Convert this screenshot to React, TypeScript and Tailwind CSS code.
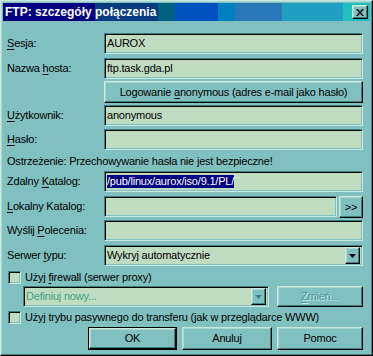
import React from 'react';

const sunken =
  'border border-t-[#408080] border-l-[#408080] border-b-[#c8e8e0] border-r-[#c8e8e0] shadow-[inset_1px_1px_0_#000,inset_-1px_-1px_0_#80c0c0] bg-[#c0dcc0]';
const raised =
  'border border-t-[#c8e8e0] border-l-[#c8e8e0] border-b-black border-r-black shadow-[inset_-1px_-1px_0_#408080,inset_1px_1px_0_#a8d8d0] bg-[#80c0c0]';

function U({ children }: { children: React.ReactNode }) {
  return <span className="underline underline-offset-[2px] decoration-1">{children}</span>;
}

function Row({ label, className, children }: { label: React.ReactNode; className: string; children?: React.ReactNode }) {
  return (
    <div className={`flex items-center h-[21px] ${className}`}>
      <div className="w-[97px] shrink-0">{label}</div>
      <div className="flex-1 flex h-full gap-[2px]">{children}</div>
    </div>
  );
}

function Field({ value, className = '' }: { value?: React.ReactNode; className?: string }) {
  return (
    <div className={`${sunken} flex-1 h-full flex items-center pl-[2px] overflow-hidden whitespace-nowrap ${className}`}>
      {value}
    </div>
  );
}

function Arrow({ disabled = false }: { disabled?: boolean }) {
  return (
    <div className={`${raised} w-[15px] h-[17px] flex items-center justify-center shrink-0`}>
      <svg width="7" height="4" viewBox="0 0 7 4">
        <path d="M0 0h7L3.5 4z" fill={disabled ? '#408080' : '#000'} />
      </svg>
    </div>
  );
}

function Checkbox() {
  return <div className={`${sunken} w-[13px] h-[13px] shrink-0`} />;
}

export default function App() {
  return (
    <div className="w-[373px] h-[356px] bg-[#80c0c0] border border-t-[#c8e8e0] border-l-[#c8e8e0] border-b-black border-r-black shadow-[inset_-1px_-1px_0_#408080,inset_1px_1px_0_#a8d8d0] p-[1px] font-['Liberation_Sans',Arial,sans-serif] text-[11px] tracking-[-0.2px] text-black leading-none select-none">
      <div className="mx-[1px] mt-[1px] h-[18px] flex items-center justify-between pl-[2px] pr-[2px] bg-[linear-gradient(to_right,#000080_0_92px,#083a80_92px_155px,#006080_155px_172px,#0050c0_172px_215px,#0080c0_215px_232px,#2878b8_232px_279px,#20a0c0_279px_340px,#20c0c0_340px)]">
        <span className="text-white font-bold text-[12px] tracking-normal">FTP: szczegóły połączenia</span>
        <div className={`${raised} w-[16px] h-[14px] flex items-center justify-center`}>
          <svg width="8" height="7" viewBox="0 0 8 7">
            <path d="M0 0h2l2 2.5L6 0h2L5 3.5 8 7H6L4 4.5 2 7H0l3-3.5z" fill="#000" />
          </svg>
        </div>
      </div>

      <div className="pl-[5px] pr-[8px]">
        <Row className="mt-[12px]" label={<><U>S</U>esja:</>}>
          <Field value="AUROX" />
        </Row>
        <Row className="mt-[4px]" label={<>Nazwa <U>h</U>osta:</>}>
          <Field value="ftp.task.gda.pl" />
        </Row>
        <div className="flex mt-[2px]">
          <div className="w-[97px] shrink-0" />
          <div className={`${raised} flex-1 h-[22px] flex items-center justify-center`}>
            <span>
              Logowanie <U>a</U>nonymous (adres e-mail jako hasło)
            </span>
          </div>
        </div>
        <Row className="mt-[2px]" label={<><U>U</U>żytkownik:</>}>
          <Field value="anonymous" />
        </Row>
        <Row className="mt-[3px]" label={<><U>H</U>asło:</>}>
          <Field />
        </Row>
        <div className="h-[21px] flex items-center pt-[2px]">
          Ostrzeżenie: Przechowywanie hasła nie jest bezpieczne!
        </div>
        <Row className="mt-0" label={<>Zdalny <U>K</U>atalog:</>}>
          <Field
            value={<span className="bg-[#000080] text-white py-[1px]">/pub/linux/aurox/iso/9.1/PL/</span>}
          />
        </Row>
        <Row className="mt-[4px]" label={<><U>L</U>okalny Katalog:</>}>
          <Field />
          <div className={`${raised} w-[24px] h-[22px] flex items-center justify-center shrink-0`}>&gt;&gt;</div>
        </Row>
        <Row className="mt-[3px]" label={<>Wyślij <U>P</U>olecenia:</>}>
          <Field />
        </Row>
        <Row className="mt-[4px]" label={<>Serwer <U>t</U>ypu:</>}>
          <div className={`${sunken} flex-1 h-full flex items-center justify-between pl-[2px] pr-[2px]`}>
            <span>Wykryj automatycznie</span>
            <Arrow />
          </div>
        </Row>

        <div className="flex items-center gap-[4px] mt-[5px] ml-[1px] h-[13px]">
          <Checkbox />
          <span>
            Użyj <U>f</U>irewall (serwer proxy)
          </span>
        </div>

        <div className="flex mt-[2px] h-[21px] pl-[16px] gap-[8px]">
          <div className={`${sunken} w-[246px] h-full flex items-center justify-between pl-[2px] pr-[2px]`}>
            <span className="text-[#40a080]">Definiuj nowy...</span>
            <Arrow disabled />
          </div>
          <div className={`${raised} flex-1 h-full flex items-center justify-center text-[#509898] [text-shadow:1px_1px_0_#c8e8e0]`}>
            <span>
              <U>Z</U>mień...
            </span>
          </div>
        </div>

        <div className="flex items-center gap-[4px] mt-[4px] ml-[1px] h-[13px]">
          <Checkbox />
          <span>Użyj trybu pasywnego do transferu (jak w przeglądarce WWW)</span>
        </div>

        <div className="flex justify-end gap-[5px] mt-[3px] h-[23px]">
          <div className="border border-black w-[89px] h-full flex">
            <div className={`${raised} flex-1 flex items-center justify-center`}>OK</div>
          </div>
          <div className={`${raised} w-[90px] h-full flex items-center justify-center`}>Anuluj</div>
          <div className={`${raised} w-[86px] h-full flex items-center justify-center`}>Pomoc</div>
        </div>
      </div>
    </div>
  );
}
